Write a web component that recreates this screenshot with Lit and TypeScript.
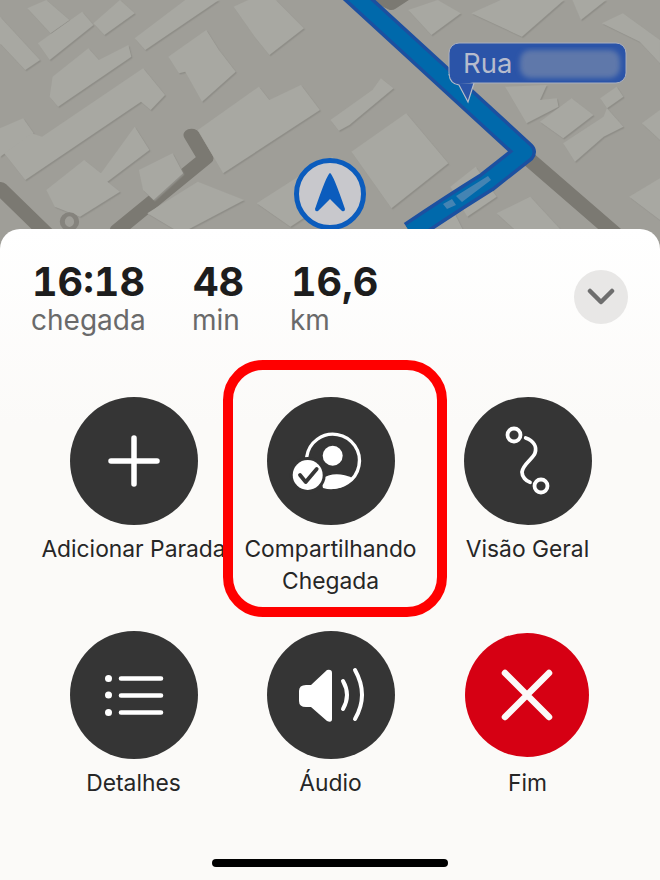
import { LitElement, html, css, svg } from "lit";
import { customElement } from "lit/decorators.js";

const buildings = [
  "0,50 95,180 60,210 0,130",
  "65,25 110,0 165,60 120,100",
  "90,130 195,35 222,75 118,180",
  "222,70 285,0 320,40 248,105",
  "320,115 440,0 520,0 345,150",
  "555,20 590,0 655,0 722,85 640,165 605,110",
  "125,230 210,145 235,180 305,135 312,170 138,320 118,290",
  "400,170 490,90 520,150 560,215 480,305 440,215 425,220",
  "0,385 55,355 80,400 0,470",
  "10,460 75,400 100,410 340,205 392,285 358,330 335,305 60,540",
  "470,390 615,260 640,300 715,255 760,330 530,520",
  "785,360 885,270 905,235 935,265 830,375 805,392",
  "110,570 200,480 240,520 320,380 355,450 255,545 285,575 190,650 130,620",
  "330,510 410,460 435,520 365,600 340,570",
  "350,640 470,545 580,600 430,700",
  "835,455 965,340 1065,490 930,625",
  "610,610 740,505 790,470 835,560 690,680",
  "970,30 1040,0 1095,40 1025,105",
  "1120,40 1190,0 1340,0 1240,110",
  "1360,0 1440,0 1380,60",
  "1430,70 1480,40 1568,120 1568,190 1520,125",
  "1200,260 1299,255 1283,300 1323,295 1327,320 1251,370",
  "1283,365 1358,295 1410,345 1338,415",
  "1338,430 1434,350 1442,325 1481,380 1434,410 1366,485",
  "1426,295 1465,260 1481,290 1442,325",
  "1525,370 1568,330 1568,420",
  "1495,590 1568,535 1568,660",
  "1070,560 1130,500 1180,590 1110,650",
  "1000,640 1060,590 1100,690 1050,720",
  "1180,640 1260,590 1340,700 1250,720",
];

@customElement("app-root")
export class AppRoot extends LitElement {
  static styles = css`
    :host {
      display: block;
      width: 660px;
      height: 880px;
      overflow: hidden;
      background: #9f9e98;
      font-family: Inter, "Liberation Sans", sans-serif;
      color: #1e1e1e;
    }
    .map {
      display: block;
      width: 660px;
      height: 229px;
    }
    .sheet {
      position: relative;
      height: 651px;
      box-sizing: border-box;
      border-radius: 20px 20px 0 0;
      background: linear-gradient(#ffffff, #fbfaf8 30%);
      display: flex;
      flex-direction: column;
    }
    .head {
      display: flex;
      align-items: flex-start;
      padding: 33px 32px 0 31px;
      height: 138px;
      box-sizing: border-box;
    }
    .stat { display: flex; flex-direction: column; }
    .stat.a { width: 161px; }
    .stat.b { width: 98px; }
    .num {
      font-size: 39.6px;
      font-weight: 700;
      line-height: 40px;
      padding-left: 1px;
      color: #1d1d1d;
      font-variant-numeric: tabular-nums;
    }
    .unit {
      font-size: 28px;
      font-weight: 400;
      line-height: 34px;
      color: #6a6a6a;
      margin-top: 1px;
    }
    .chev {
      margin-left: auto;
      margin-top: 8px;
      width: 54px;
      height: 54px;
      border-radius: 50%;
      background: #e8e7e6;
      display: flex;
      align-items: center;
      justify-content: center;
    }
    .chev svg { width: 28px; height: 18px; }
    .grid {
      display: grid;
      grid-template-columns: repeat(3, 197px);
      row-gap: 34px;
      padding: 30px 0 0 35px;
    }
    .item {
      position: relative;
      display: flex;
      flex-direction: column;
      align-items: center;
      min-height: 200px;
    }
    .row2 { min-height: 168px; }
    .disc {
      width: 128px;
      height: 128px;
      border-radius: 50%;
      background: #353535;
      display: flex;
      align-items: center;
      justify-content: center;
      flex: none;
    }
    .disc svg { width: 128px; height: 128px; display: block; }
    .disc.red { background: #d60013; width: 124px; height: 124px; margin: 2px 1px 2px 0; }
    .disc.red svg { width: 124px; height: 124px; }
    .label {
      margin-top: 8px;
      font-size: 22.8px;
      line-height: 32px;
      color: #262626;
      text-align: center;
      white-space: nowrap;
    }
    .mark {
      position: absolute;
      left: -9px;
      top: -37px;
      width: 224px;
      height: 257px;
      box-sizing: border-box;
      border: 10px solid #ff0000;
      border-radius: 40px;
      pointer-events: none;
    }
    .home {
      width: 236px;
      height: 8px;
      border-radius: 4px;
      background: #000;
      margin: auto auto 13px;
    }
  `;

  private map() {
    return html`<svg class="map" viewBox="0 0 660 229" preserveAspectRatio="xMinYMin slice">
      <defs>
        <filter id="soft" x="-5%" y="-5%" width="110%" height="110%">
          <feDropShadow dx="3" dy="4" stdDeviation="1.5" flood-color="#8f8e88"/>
        </filter>
        <filter id="blur"><feGaussianBlur stdDeviation="2.5"/></filter>
      </defs>
      <rect width="660" height="240" fill="#9f9e98"/>
      <g transform="scale(0.4209 0.3333)">
        <g fill="none" stroke="#7b7972" stroke-linecap="round" stroke-linejoin="round">
          <path d="M0 565 L110 700" stroke-width="38"/>
          <path d="M455 405 L488 475 L280 690" stroke-width="38"/>
          <path d="M1250 470 L1460 700" stroke-width="40"/>
          <path d="M890 -10 L930 15 L960 -10" stroke-width="30"/>
        </g>
        <g filter="url(#soft)">
          ${buildings.map((p) => svg`<polygon points=${p} fill="#a8a8a2"/>`)}
        </g>
        <ellipse cx="165" cy="665" rx="17" ry="22" fill="none" stroke="#85837d" stroke-width="12"/>
      </g>
      <path d="M345 -13 L525 152 L487 182 Q450 205 410 232" fill="none" stroke="#1c50a0" stroke-width="22" stroke-linejoin="round"/>
      <path d="M345 -13 L525 152 L487 182 Q450 205 410 232" fill="none" stroke="#0069ab" stroke-width="15" stroke-linejoin="round"/>
      <path d="M456 196 L488 176 L491 180 L462 202 Z M443 204 L452 199 L456 205 L447 209 Z" fill="#5b8eb5" opacity="0.75"/>
      <circle cx="330" cy="194" r="33.5" fill="#c8c8cc" stroke="#0b5cbd" stroke-width="5"/>
      <path d="M330 173 Q333 174 345 209 Q345 212 342 211 L330 199 L318 211 Q315 212 315 209 Q327 174 330 173 Z" fill="#0b5cbd"/>
      <path d="M449 74 Q450 84 459 85 L468 102 L474 83" fill="#2b54a8" stroke="#b9bdc8" stroke-width="1.2"/>
      <rect x="449" y="43" width="177" height="40" rx="10" fill="#2b54a8" stroke="#a9afbf" stroke-width="1"/>
      <path d="M450 76 Q451 83 459 84 L473 83" fill="#2b54a8"/>
      <text x="463" y="73" font-size="27.5" fill="#b6bccd" font-family="Inter, 'Liberation Sans', sans-serif">Rua</text>
      <rect x="520" y="50" width="100" height="28" rx="10" fill="#5f78aa" filter="url(#blur)"/>
    </svg>`;
  }

  render() {
    return html`
      ${this.map()}
      <section class="sheet">
        <div class="head">
          <div class="stat a"><span class="num">16:18</span><span class="unit">chegada</span></div>
          <div class="stat b"><span class="num">48</span><span class="unit">min</span></div>
          <div class="stat"><span class="num">16,6</span><span class="unit">km</span></div>
          <div class="chev">
            <svg viewBox="0 0 28 18"><path d="M3 3 L14 14 L25 3" fill="none" stroke="#6e6e6e" stroke-width="4.5" stroke-linecap="round" stroke-linejoin="round"/></svg>
          </div>
        </div>
        <div class="grid">
          <div class="item">
            <div class="disc">
              <svg viewBox="0 0 128 128"><path d="M64 41 V87 M41 64 H87" stroke="#fff" stroke-width="5.5" stroke-linecap="round" fill="none"/></svg>
            </div>
            <div class="label">Adicionar Parada</div>
          </div>
          <div class="item">
            <div class="disc">
              <svg viewBox="0 0 128 128">
                <path d="M39.7 60 A26.5 26.5 0 1 1 60 89.5" fill="none" stroke="#fff" stroke-width="3.3" stroke-linecap="round"/>
                <circle cx="65.7" cy="58.7" r="10" fill="#fff"/>
                <path d="M54 82 Q68 73 86.3 81.3 A28 28 0 0 1 56 91 Z" fill="#fff"/>
                <circle cx="40.7" cy="78" r="18" fill="#353535"/>
                <circle cx="40.7" cy="78" r="15" fill="#fff"/>
                <path d="M33 78 L38.7 85 L49.7 72" fill="none" stroke="#353535" stroke-width="3.8" stroke-linecap="round" stroke-linejoin="round"/>
              </svg>
            </div>
            <div class="label">Compartilhando<br />Chegada</div>
            <div class="mark"></div>
          </div>
          <div class="item">
            <div class="disc">
              <svg viewBox="0 0 128 128">
                <circle cx="50" cy="38" r="6.5" fill="none" stroke="#fff" stroke-width="3.8"/>
                <circle cx="77" cy="89" r="6.5" fill="none" stroke="#fff" stroke-width="3.8"/>
                <path d="M61.7 41 C70 44 73 50 71 56 C69 62 59 67 58 75 C58 80 62 84 66 85.3" fill="none" stroke="#fff" stroke-width="3.8" stroke-linecap="round"/>
              </svg>
            </div>
            <div class="label">Visão Geral</div>
          </div>
          <div class="item row2">
            <div class="disc">
              <svg viewBox="0 0 128 128">
                <g fill="#fff"><circle cx="38.5" cy="47.5" r="3.5"/><circle cx="38.5" cy="64" r="3.5"/><circle cx="38.5" cy="81.5" r="3.5"/></g>
                <path d="M51 47.5 H91 M51 64.5 H91 M51 81.5 H91" stroke="#fff" stroke-width="4.6" stroke-linecap="round"/>
              </svg>
            </div>
            <div class="label">Detalhes</div>
          </div>
          <div class="item row2">
            <div class="disc">
              <svg viewBox="0 0 128 128">
                <path d="M39 54 Q32 54 32 60 V70 Q32 76 39 76 H44 L60 90 Q65 92 65 88 V42 Q65 38 60 39 L44 54 Z" fill="#fff"/>
                <path d="M76 50 Q84 64 76 78" fill="none" stroke="#fff" stroke-width="4" stroke-linecap="round"/>
                <path d="M88 39 Q102 64 88 88" fill="none" stroke="#fff" stroke-width="4" stroke-linecap="round"/>
              </svg>
            </div>
            <div class="label">Áudio</div>
          </div>
          <div class="item row2">
            <div class="disc red">
              <svg viewBox="0 0 124 124"><path d="M40 40 L84 84 M84 40 L40 84" stroke="#fbfaf8" stroke-width="6.5" stroke-linecap="round"/></svg>
            </div>
            <div class="label">Fim</div>
          </div>
        </div>
        <div class="home"></div>
      </section>
    `;
  }
}
